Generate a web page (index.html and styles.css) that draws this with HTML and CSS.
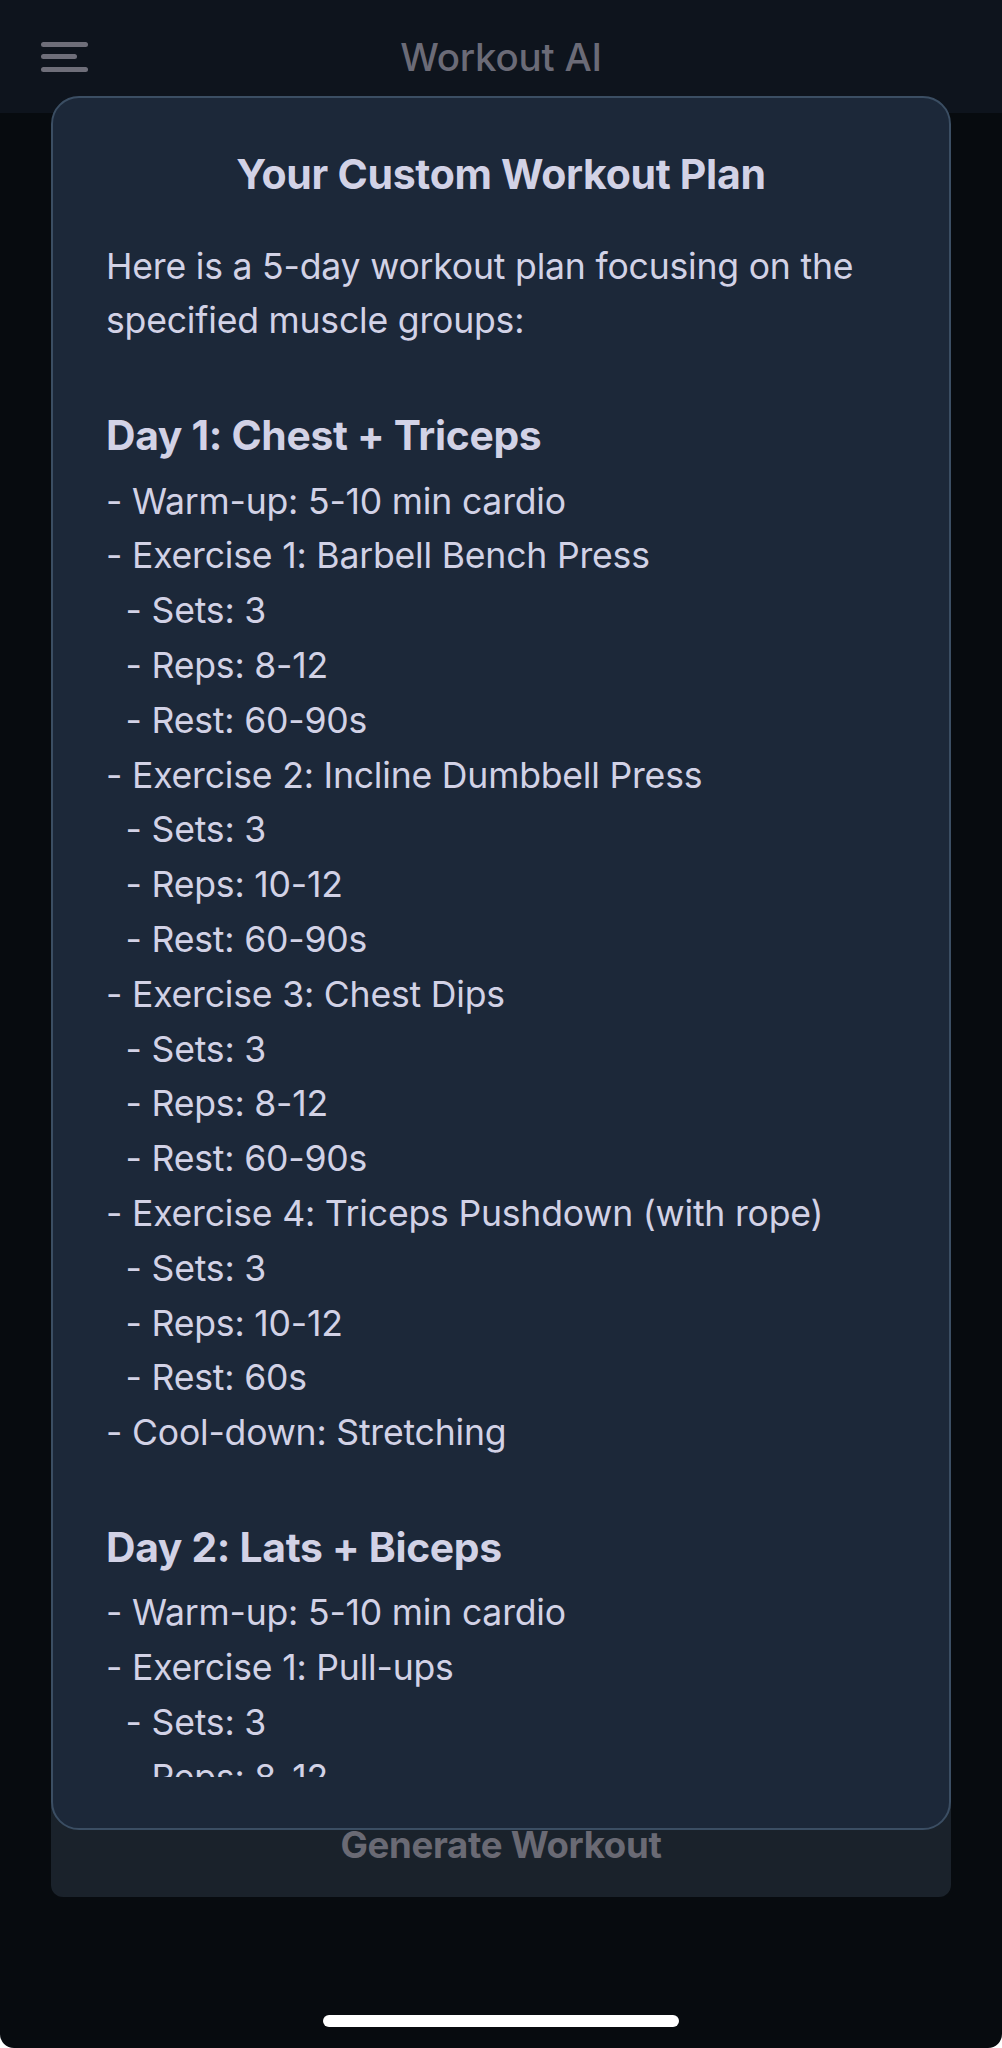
FILE: index.html
```html
<!DOCTYPE html>
<html lang="en">
<head>
<meta charset="utf-8">
<title>Workout AI</title>
<link rel="stylesheet" href="styles.css">
</head>
<body>
<div class="app">
  <header class="topbar">
    <button class="menu" aria-label="Menu">
      <span class="bar"></span>
      <span class="bar short"></span>
      <span class="bar"></span>
    </button>
    <h1 class="app-title">Workout AI</h1>
    <span class="spacer"></span>
  </header>
  <main class="main">
    <button class="generate">Generate Workout</button>
  </main>

  <section class="plan-card">
    <h2 class="plan-title">Your Custom Workout Plan</h2>
    <div class="plan-scroll">
      <p class="intro">Here is a 5-day workout plan focusing on the specified muscle groups:</p>

      <h3 class="day">Day 1: Chest + Triceps</h3>
      <div class="line">- Warm-up: 5-10 min cardio</div>
      <div class="line">- Exercise 1: Barbell Bench Press</div>
      <div class="line sub">- Sets: 3</div>
      <div class="line sub">- Reps: 8-12</div>
      <div class="line sub">- Rest: 60-90s</div>
      <div class="line">- Exercise 2: Incline Dumbbell Press</div>
      <div class="line sub">- Sets: 3</div>
      <div class="line sub">- Reps: 10-12</div>
      <div class="line sub">- Rest: 60-90s</div>
      <div class="line">- Exercise 3: Chest Dips</div>
      <div class="line sub">- Sets: 3</div>
      <div class="line sub">- Reps: 8-12</div>
      <div class="line sub">- Rest: 60-90s</div>
      <div class="line">- Exercise 4: Triceps Pushdown (with rope)</div>
      <div class="line sub">- Sets: 3</div>
      <div class="line sub">- Reps: 10-12</div>
      <div class="line sub">- Rest: 60s</div>
      <div class="line">- Cool-down: Stretching</div>

      <h3 class="day">Day 2: Lats + Biceps</h3>
      <div class="line">- Warm-up: 5-10 min cardio</div>
      <div class="line">- Exercise 1: Pull-ups</div>
      <div class="line sub">- Sets: 3</div>
      <div class="line sub">- Reps: 8-12</div>
      <div class="line sub">- Rest: 60-90s</div>
    </div>
  </section>

  <div class="home-indicator"></div>
</div>
</body>
</html>
```

FILE: styles.css
```css
* {
  box-sizing: border-box;
}

html, body {
  margin: 0;
  padding: 0;
  background: #ffffff;
}

body {
  font-family: Inter, "Noto Sans", "Liberation Sans", sans-serif;
}

.app {
  position: relative;
  width: 1002px;
  height: 2048px;
  background: #070b0f;
  border-radius: 0 0 14px 14px;
  overflow: hidden;
  display: flex;
  flex-direction: column;
}

.topbar {
  height: 113px;
  flex: none;
  background: #0e141d;
  display: grid;
  grid-template-columns: 1fr auto 1fr;
  align-items: center;
  padding: 0 41px;
}

.menu {
  justify-self: start;
  display: flex;
  flex-direction: column;
  gap: 7.5px;
  width: 47px;
  padding: 0;
  margin: 0;
  border: 0;
  background: none;
}

.bar {
  display: block;
  width: 47px;
  height: 5px;
  border-radius: 3px;
  background: #6e6e79;
}

.bar.short {
  width: 36px;
}

.app-title {
  margin: 0;
  font-size: 38.5px;
  font-weight: 500;
  color: #6b6b77;
  letter-spacing: -0.2px;
  line-height: 44px;
}

.main {
  flex: 1;
  display: flex;
  flex-direction: column;
  justify-content: flex-end;
  padding: 0 51px 151px;
}

.generate {
  height: 104px;
  border: 0;
  border-radius: 12px;
  background: #1a222b;
  color: #6a6a74;
  font-family: inherit;
  font-size: 36.6px;
  font-weight: 700;
  letter-spacing: -0.3px;
}

.plan-card {
  position: absolute;
  top: 96px;
  left: 51px;
  width: 900px;
  height: 1734px;
  background: #1c2839;
  border: 2px solid #3b4e63;
  border-radius: 28px;
  padding: 51px 53px 51px 53px;
  display: flex;
  flex-direction: column;
  color: #d2d2e6;
}

.plan-title {
  margin: 0 0 38px;
  text-align: center;
  font-size: 41px;
  line-height: 50px;
  font-weight: 700;
  letter-spacing: -0.3px;
}

.plan-scroll {
  flex: 1;
  overflow: hidden;
  font-size: 35.6px;
  line-height: 54.8px;
  letter-spacing: -0.2px;
}

.intro {
  margin: 2.5px 0 0;
}

.day {
  margin: 61px 0 14.5px;
  font-size: 40.8px;
  line-height: 50px;
  font-weight: 700;
  letter-spacing: -0.3px;
}

.line {
  white-space: nowrap;
}

.line.sub {
  padding-left: 19.6px;
}

.home-indicator {
  position: absolute;
  left: 323px;
  top: 2015px;
  width: 356px;
  height: 12px;
  border-radius: 6px;
  background: #ffffff;
}
```
